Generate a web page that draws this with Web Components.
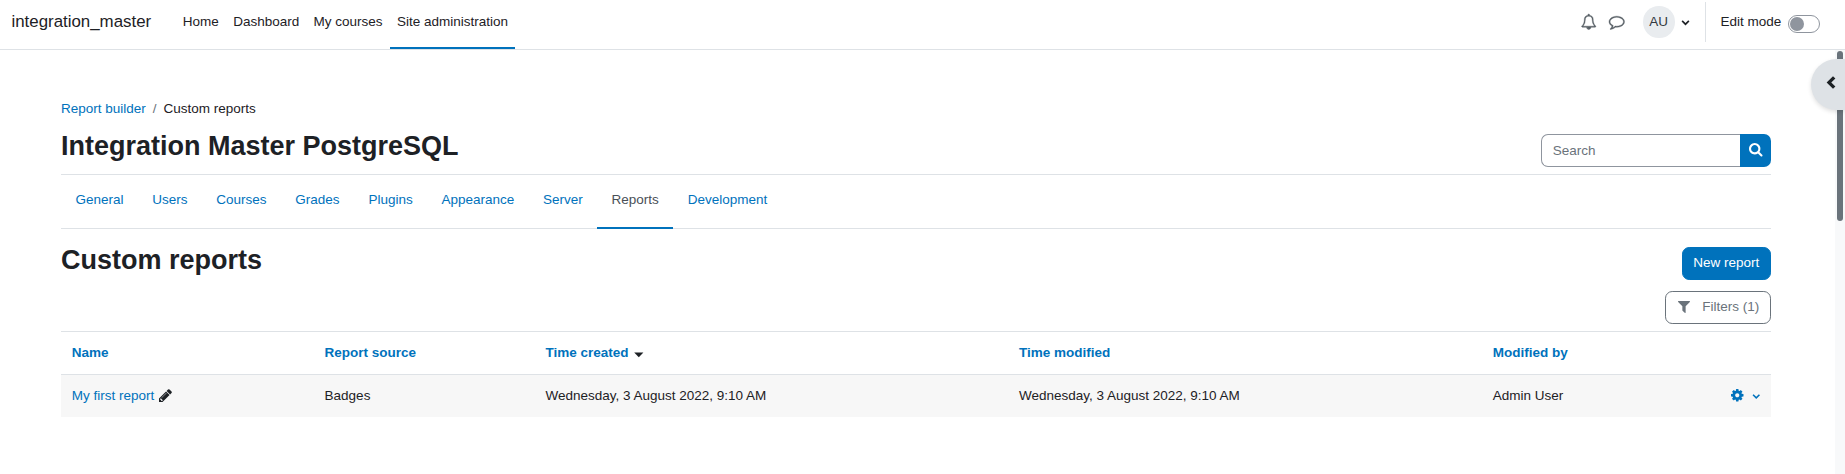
<!DOCTYPE html>
<html lang="en">
<head>
<meta charset="utf-8">
<title>Custom reports</title>
<style>
html,body{margin:0;height:100%;overflow:hidden;background:#fff}
body{font:13.5px/20.25px "Liberation Sans",Arial,sans-serif;color:#1d2125}
</style>
</head>
<body>
<report-app></report-app>
<script>
const define = (name, html) => {
  const t = document.createElement('template');
  t.innerHTML = html;
  customElements.define(name, class extends HTMLElement {
    constructor() {
      super();
      this.attachShadow({mode: 'open'}).append(t.content.cloneNode(true));
    }
  });
};

const ICONS = {
  bell: [1792, 'M912 1696q0-16-16-16-59 0-101.500-42.500T752 1536q0-16-16-16t-16 16q0 73 51.500 124.500T896 1712q16 0 16-16zM246 1408h1300q-266-300-266-832 0-51-24-105t-69-103-121.500-80.500T896 256t-169.500 31.500T605 368t-69 103-24 105q0 532-266 832zm1482 0q0 52-38 90t-90 38h-448q0 106-75 181t-181 75-181-75-75-181H192q-52 0-90-38t-38-90q50-42 91-88t85-119.500 74.500-158.500 50-206T384 576q0-152 117-282.500T808 135q-8-19-8-39 0-40 28-68t68-28 68 28 28 68q0 20-8 39 190 28 307 158.500T1408 576q0 139 19.500 260t50 206 74.500 158.500 85 119.500 91 88z'],
  comment: [1792, 'M896 384q-204 0-381.500 69.500T232.500 641 128 896q0 112 71.500 213.500T401 1285l87 50-27 96q-24 91-70 172 152-63 275-171l43-38 57 6q69 8 130 8 204 0 381.500-69.500t282-187.500 104.500-255-104.500-255-282-187.500T896 384zm896 512q0 174-120 321.500t-326 233-450 85.500q-70 0-145-8-198 175-460 242-49 14-114 22h-5q-15 0-27-10.500t-16-27.500v-1q-3-4-.5-12t2-10 4.500-9.500l6-9 7-8.500 8-9q7-8 31-34.500t34.500-38 31-39.500 32.500-51 27-59 26-76q-157-89-247.500-220T0 896q0-174 120-321.500t326-233T896 256t450 85.500 326 233T1792 896z'],
  search: [1664, 'M1152 704q0-185-131.500-316.500T704 256 387.500 387.500 256 704t131.500 316.500T704 1152t316.500-131.500T1152 704zm512 832q0 52-38 90t-90 38q-54 0-90-38l-343-342q-179 124-399 124-143 0-273.500-55.500t-225-150-150-225T0 704t55.500-273.500 150-225 225-150T704 0t273.500 55.500 225 150 150 225T1408 704q0 220-124 399l343 343q37 37 37 90z'],
  filter: [1408, 'M1403 39q17 41-14 70L896 602v742q0 42-39 59-13 5-25 5-27 0-45-19l-256-256q-19-19-19-45V602L19 109Q-12 80 5 39 22 0 64 0h1280q42 0 59 39z'],
  pencil: [1536, 'M363 1408l91-91-235-235-91 91v107h128v128h107zm523-928q0-22-22-22-10 0-17 7l-542 542q-7 7-7 17 0 22 22 22 10 0 17-7l542-542q7-7 7-17zm-54-192l416 416-832 832H0v-416zm683 96q0 53-37 90l-166 166-416-416 166-165q36-38 90-38 53 0 91 38l235 234q37 39 37 91z'],
  cog: [1536, 'M1024 768q0-106-75-181t-181-75-181 75-75 181 75 181 181 75 181-75 75-181zm512-109v222q0 12-8 23t-20 13l-185 28q-19 54-39 91 35 50 107 138 10 12 10 25t-9 23q-27 37-99 108t-94 71q-12 0-26-9l-138-108q-44 23-91 38-16 136-29 186-7 28-36 28H657q-14 0-24.500-8.500T621 1506l-28-184q-49-16-90-37l-141 107q-10 9-25 9-14 0-25-11-126-114-165-168-7-10-7-23 0-12 8-23 15-21 51-66.500t54-70.500q-27-50-41-99l-183-27q-13-2-21-12.500T0 877V655q0-12 8-23t19-13l186-28q14-46 39-92-40-57-107-138-10-12-10-24 0-10 9-23 26-36 98.500-107.500T337 135q13 0 26 10l138 107q44-23 91-38 16-136 29-186 7-28 36-28h222q14 0 24.500 8.500T915 30l28 184q49 16 90 37l142-107q9-9 24-9 13 0 25 10 129 119 165 170 7 8 7 22 0 12-8 23-15 21-51 66.500t-54 70.500q26 50 41 98l183 28q13 2 21 12.500t8 23.500z'],
  down: [10, 'M1.900 2.500 5 5.500 8.100 2.500 9.400 3.900 5 8.300.6 3.900z'],
  left: [10, 'M6.400.2 8.300 2 5 5.200 8.300 8.400 6.400 10.200 1.300 5.200z'],
  caret: [10, 'M.2 2.500H9.800L5 7.600z']
};
customElements.define('ui-icon', class extends HTMLElement {
  connectedCallback() {
    const [box, d] = ICONS[this.getAttribute('name')];
    if (!this.shadowRoot) this.attachShadow({mode: 'open'}).innerHTML =
      `<style>:host{display:block;width:14px;height:14px;flex:none}svg{display:block;width:100%;height:100%;overflow:visible}path{stroke:currentColor;stroke-width:var(--weight,0)}</style><svg viewBox="0 0 ${box} ${box}" fill="currentColor"><path d="${d}"/></svg>`;
  }
});

define('nav-item', `<style>
:host{display:flex;box-sizing:border-box;height:100%;padding:12px 7.200px 0;border-bottom:2px solid transparent;white-space:nowrap}
:host([active]){border-color:#0072bc}
</style><slot></slot>`);

define('site-navbar', `<style>
:host{display:flex;height:49px;border-bottom:1px solid #dee2e6;padding:0 25px 0 11.500px}
.brand{font-size:16.875px;line-height:25px;padding-top:9px;width:164.100px}
nav{display:flex;height:49px}
.right{margin-left:auto;display:flex;align-items:flex-start;color:#1d2125}
.bell{width:15.500px;height:15.500px;margin-top:14px;color:#555d64;--weight:45}
.comment{width:15.500px;height:15.500px;margin:14px 0 0 12.500px;color:#555d64;--weight:45}
.avatar{width:31.500px;height:31.500px;line-height:32px;border-radius:50%;background:#e9ecef;text-align:center;margin:6px 0 0 18.500px;color:#343a40}
.down{width:9px;height:9px;margin:17.500px 1px 0 6px}
.edit{display:flex;height:40px;margin:2px 0 0 14.500px;border-left:1px solid #dee2e6;padding-left:14.500px;line-height:20px}
.edit span{margin-top:10px;width:67.500px}
.switch{box-sizing:border-box;width:32px;height:18px;border:1px solid #8f959e;border-radius:9px;margin-top:13px;padding:1px}
.switch i{display:block;width:14px;height:14px;border-radius:50%;background:#8f959e}
</style>
<div class="brand">integration_master</div>
<nav><nav-item>Home</nav-item><nav-item>Dashboard</nav-item><nav-item>My courses</nav-item><nav-item active>Site administration</nav-item></nav>
<div class="right"><ui-icon class="bell" name="bell"></ui-icon><ui-icon class="comment" name="comment"></ui-icon><div class="avatar">AU</div><ui-icon class="down" name="down"></ui-icon><div class="edit"><span>Edit mode</span><div class="switch"><i></i></div></div></div>`);

define('page-header', `<style>
:host{display:block}
.crumbs{display:flex;gap:7px;color:#6a737b}
a{color:#0072bc}b{font-weight:400;color:#1d2125}
.row{display:flex;justify-content:space-between;align-items:flex-start;height:55px}
h1{font-size:27px;line-height:32.400px;margin:11.300px 0 0}
.search{display:flex;width:230px;height:33px;margin-top:15.250px}
.field{flex:1;border:1px solid #8f959e;border-right:0;border-radius:7px 0 0 7px;padding:6px 10.800px;line-height:20px;color:#6a737b;box-sizing:border-box}
.go{width:31px;background:#0072bc;color:#fff;border-radius:0 7px 7px 0;display:grid;place-items:center}
.go ui-icon{width:13.500px;height:13.500px;margin-top:-2px}
</style>
<div class="crumbs"><a>Report builder</a><span>/</span><b>Custom reports</b></div>
<div class="row"><h1>Integration Master PostgreSQL</h1><div class="search"><div class="field">Search</div><div class="go"><ui-icon name="search"></ui-icon></div></div></div>`);

define('tab-item', `<style>
:host{display:block;box-sizing:border-box;height:54px;padding:15px 14.400px 0;border-bottom:2px solid transparent;color:#0072bc}
:host([active]){color:#495057;border-color:#0072bc}
</style><slot></slot>`);
define('admin-tabs', `<style>:host{display:flex;height:53px;border:solid #dee2e6;border-width:1px 0}</style><slot></slot>`);

define('ui-button', `<style>
:host{box-sizing:border-box;display:flex;align-items:center;height:33px;padding:0 10.800px 1px 10px;border:1px solid #0072bc;border-radius:7.200px;background:#0072bc;color:#fff;white-space:nowrap}
:host([outline]){background:#fff;color:#6a737b;border-color:#6a737b}
</style><slot></slot>`);

define('report-table', `<style>
:host{display:block}
.tr{display:grid;grid-template-columns:252.800px 220.800px 473.500px 473.900px 1fr;height:42px;border-top:1px solid #dee2e6;align-items:stretch}
.tr>div{padding-left:10.800px;display:flex;align-items:center}
.head{font-weight:700;color:#0072bc}
.body{background:#f7f7f7}
a{color:#0072bc}
.caret{width:9.600px;height:9.600px;margin:4px 0 0 6px;color:#1d2125}
.pencil{width:13px;height:13px;margin:-1px 0 0 4.500px}
.last{justify-content:space-between}
.act{display:flex;align-items:center;color:#0072bc;padding-right:11px}
.cog{width:12.500px;height:12.500px;margin-top:-1px}
.down{width:8.500px;height:8.500px;margin-left:8px}
</style>
<div class="tr head"><div>Name</div><div>Report source</div><div>Time created<ui-icon class="caret" name="caret"></ui-icon></div><div>Time modified</div><div>Modified by</div></div>
<div class="tr body"><div><a>My first report</a><ui-icon class="pencil" name="pencil"></ui-icon></div><div>Badges</div><div>Wednesday, 3 August 2022, 9:10 AM</div><div>Wednesday, 3 August 2022, 9:10 AM</div><div class="last"><span>Admin User</span><span class="act"><ui-icon class="cog" name="cog"></ui-icon><ui-icon class="down" name="down"></ui-icon></span></div></div>`);

define('scroll-rail', `<style>
:host{display:block;width:10px;background:#f8f9fa;padding:1px 2px;box-sizing:border-box}
i{display:block;width:6px;height:170px;border-radius:3px;background:#6a737b}
</style><i></i>`);
define('drawer-toggle', `<style>
:host{position:absolute;right:0;top:9px;width:34px;height:51px;border-radius:26px 0 0 26px;background:#dee2e6;box-shadow:0 2px 4px rgba(0,0,0,.12);display:flex;align-items:center;box-sizing:border-box;padding:0 0 5px 13.500px}
ui-icon{width:12.500px;height:12.500px}
</style><ui-icon name="left"></ui-icon>`);

define('report-app', `<style>
:host{display:flex;flex-direction:column;height:474px;overflow:hidden}
.main{display:flex;flex:1;position:relative}
.content{box-sizing:border-box;width:1835px;padding:48.750px 64px 0 61px}
.top{display:flex;justify-content:space-between;height:62px}
h2{font-size:27px;line-height:32.400px;margin:15px 0 0}
.top ui-button{margin-top:18px}
.filters{display:flex;justify-content:flex-end;height:40px}
.filters ui-icon{width:12px;height:12px;margin:-1px 12px 0 2.500px}
</style>
<site-navbar></site-navbar>
<div class="main"><div class="content">
<page-header></page-header>
<admin-tabs><tab-item>General</tab-item><tab-item>Users</tab-item><tab-item>Courses</tab-item><tab-item>Grades</tab-item><tab-item>Plugins</tab-item><tab-item>Appearance</tab-item><tab-item>Server</tab-item><tab-item active>Reports</tab-item><tab-item>Development</tab-item></admin-tabs>
<div class="top"><h2>Custom reports</h2><ui-button>New report</ui-button></div>
<div class="filters"><ui-button outline><ui-icon name="filter"></ui-icon>Filters (1)</ui-button></div>
<report-table></report-table>
</div><scroll-rail></scroll-rail><drawer-toggle></drawer-toggle></div>`);
</script>
</body>
</html>
